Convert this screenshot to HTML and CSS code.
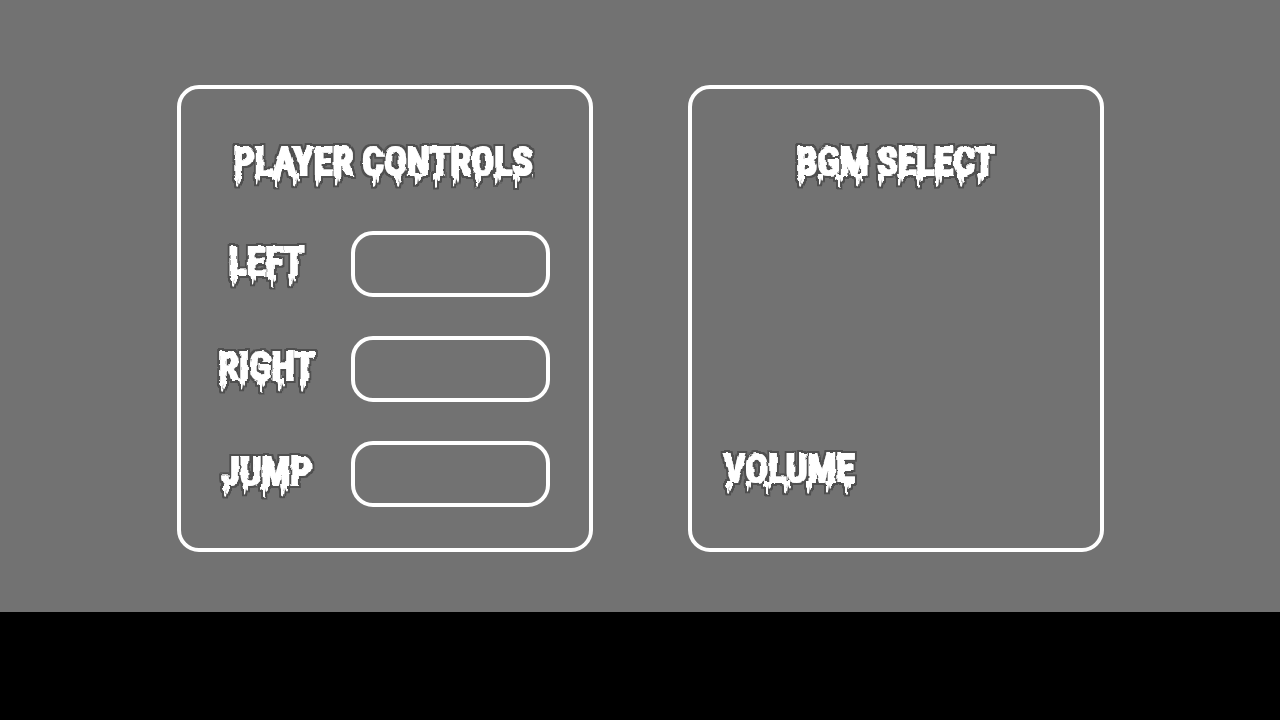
FILE: index.html
```html
<!DOCTYPE html>
<html lang="en">
<head>
<meta charset="utf-8">
<title>Settings</title>
<link rel="stylesheet" href="styles.css">
</head>
<body>
<svg class="defs" width="0" height="0" aria-hidden="true">
  <filter id="slime" x="-5%" y="-20%" width="110%" height="150%">
    <feTurbulence type="fractalNoise" baseFrequency="0.16" numOctaves="1" seed="4" result="noise"/>
    <feDisplacementMap in="SourceGraphic" in2="noise" scale="4" xChannelSelector="R" yChannelSelector="G" result="rough"/>
    <feMorphology in="rough" operator="dilate" radius="2" result="fat"/>
    <feGaussianBlur in="fat" stdDeviation="0.6" result="soft"/>
    <feFlood flood-color="#505050"/>
    <feComposite in2="soft" operator="in" result="edge"/>
    <feMerge><feMergeNode in="edge"/><feMergeNode in="rough"/></feMerge>
  </filter>
  <pattern id="drips" width="80" height="16" patternUnits="userSpaceOnUse">
    <path fill="#fff" d="M2 0H8V7L6 9L6 4L5 12Q4 14 3 11V5L2 6ZM21 0H28V5L26 8L25 4L24 10L22 11V4ZM40 0H47V6L45 8L44 4V13Q42 15 42 12V5L40 6ZM59 0H66V6L65 9L63 4L62 12Q61 13 60 11V4Z"/>
  </pattern>
</svg>
<main class="stage">
  <form class="card">
    <h2 class="title"><span class="spooky">PLAYER CONTROLS<svg class="drip" aria-hidden="true"><rect width="118" height="16" fill="url(#drips)"/><rect x="130" width="100%" height="16" fill="url(#drips)"/></svg></span></h2>
    <div class="rows">
      <label for="left"><span class="spooky">LEFT<svg class="drip" aria-hidden="true"><rect width="100%" height="16" fill="url(#drips)"/></svg></span></label>
      <input id="left" type="text">
      <label for="right"><span class="spooky">RIGHT<svg class="drip" aria-hidden="true"><rect width="100%" height="16" fill="url(#drips)"/></svg></span></label>
      <input id="right" type="text">
      <label for="jump"><span class="spooky">JUMP<svg class="drip" aria-hidden="true"><rect width="80" height="16" fill="url(#drips)"/></svg></span></label>
      <input id="jump" type="text">
    </div>
  </form>
  <section class="card">
    <h2 class="title"><span class="spooky">BGM SELECT<svg class="drip" aria-hidden="true"><rect width="100%" height="16" fill="url(#drips)"/></svg></span></h2>
    <h3 class="volume"><span class="spooky">VOLUME<svg class="drip" aria-hidden="true"><rect width="100%" height="16" fill="url(#drips)"/></svg></span></h3>
  </section>
</main>
</body>
</html>
```
FILE: styles.css
```css
* { box-sizing: border-box; }
body {
  margin: 0;
  min-height: 100vh;
  background: #000;
  color: #fff;
  font: bold 38px/52px "Liberation Sans Narrow", "Roboto Condensed", "Open Sans Condensed", sans-serif;
}
.defs { position: absolute; }
.stage {
  min-height: 85vh;
  padding: 85px 20px 60px;
  display: flex;
  justify-content: center;
  gap: 95px;
  background: #727272;
}
.card {
  flex: 0 1 416px;
  padding: 47px 39px 41px 36px;
  border: 4px solid #fff;
  border-radius: 22px;
  display: flex;
  flex-direction: column;
}
.card + .card { padding-left: 32px; padding-right: 32px; }
.title, .volume { margin: 0; font-size: inherit; }
.title { text-align: center; margin-bottom: 43px; white-space: nowrap; }
.rows {
  display: grid;
  grid-template-columns: 100px 1fr;
  gap: 39px 34px;
  align-items: center;
}
.rows label { text-align: center; padding-bottom: 4px; }
.rows input {
  width: 100%;
  height: 66px;
  padding: 0 16px;
  border: 4px solid #fff;
  border-radius: 22px;
  background: transparent;
  color: #fff;
  font: inherit;
}
.volume { margin-top: auto; padding-bottom: 12px; }
.spooky {
  display: inline-block;
  position: relative;
  -webkit-text-stroke: 2px #fff;
  filter: url(#slime);
}
.drip {
  position: absolute;
  left: 0;
  top: 38px;
  width: 100%;
  height: 16px;
}
```
